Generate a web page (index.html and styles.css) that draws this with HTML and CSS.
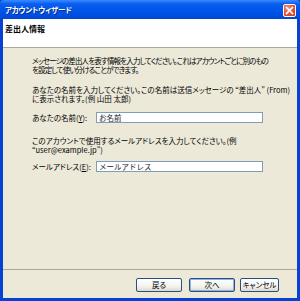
FILE: index.html
```html
<!DOCTYPE html>
<html lang="ja">
<head>
<meta charset="utf-8">
<link rel="stylesheet" href="styles.css">
</head>
<body>
<div class="window">
  <div class="titlebar">
    <span class="title">アカウントウィザード</span>
    <span class="close">
      <svg width="9" height="9" viewBox="0 0 9 9"><path d="M1.5 1.5 L7.5 7.5 M7.5 1.5 L1.5 7.5" stroke="#fff" stroke-width="1.6" stroke-linecap="square"/></svg>
    </span>
  </div>
  <div class="client">
    <div class="header">差出人情報</div>
    <div class="content">
      <p class="para p1">メッセージの差出人を表す情報を入力してください。これはアカウントごとに別のもの<br>を設定して使い分けることができます。</p>
      <p class="para p2">あなたの名前を入力してください。この名前は送信メッセージの “差出人” (From)<br>に表示されます。(例 山田 太郎)</p>
      <div class="row r1">
        <span class="label">あなたの名前(<u>Y</u>):</span>
        <span class="input">お名前</span>
      </div>
      <p class="para p3">このアカウントで使用するメールアドレスを入力してください。(例<br>“user@example.jp”)</p>
      <div class="row r2">
        <span class="label">メールアドレス(<u>E</u>):</span>
        <span class="input">メールアドレス</span>
      </div>
    </div>
    <div class="footer">
      <span class="btn back">戻る</span>
      <span class="btn next">次へ</span>
      <span class="btn cancel">キャンセル</span>
    </div>
  </div>
</div>
</body>
</html>
```

FILE: styles.css
```css
html, body {
  margin: 0;
  padding: 0;
  background: #ffffff;
}
.window {
  width: 300px;
  height: 301px;
  box-sizing: border-box;
  display: flex;
  flex-direction: column;
  background: #0842d4;
  padding: 0 3px 3px 3px;
  font-family: "Noto Sans CJK JP", sans-serif;
  font-feature-settings: "palt";
  color: #000;
}
.titlebar {
  height: 19px;
  margin: 0 -3px;
  padding: 0 4px 0 5px;
  display: flex;
  align-items: center;
  justify-content: space-between;
  background: linear-gradient(to bottom, #3a8cff 0%, #0a5ef0 20%, #0055e8 55%, #004ee0 80%, #0046d2 100%);
  border-radius: 4px 4px 0 0;
}
.title {
  color: #fff;
  font-size: 7.5px;
  font-weight: bold;
  letter-spacing: -0.2px;
  text-shadow: 1px 1px 0 #0a2a8a;
}
.close {
  width: 11px;
  height: 11px;
  margin-top: 1px;
  border: 1px solid #fff;
  border-radius: 2px;
  background: radial-gradient(circle at 35% 30%, #f29a80 0%, #e4583a 45%, #c8381c 100%);
  display: flex;
  align-items: center;
  justify-content: center;
}
.client {
  flex: 1;
  display: flex;
  flex-direction: column;
  background: #ece9d8;
}
.header {
  height: 29px;
  box-sizing: border-box;
  background: #ffffff;
  border-bottom: 1px solid #aca899;
  padding: 5px 0 0 2px;
  font-size: 8px;
  font-weight: bold;
  line-height: 10px;
}
.content {
  flex: 1;
  padding: 8px 0 0 29px;
  font-size: 7.5px;
  line-height: 9px;
}
.para {
  margin: 0;
  white-space: nowrap;
}
.p1 { letter-spacing: -0.85px; }
.p2 { margin-top: 11px; }
.p3 { margin-top: 13px; }
.row {
  display: flex;
  align-items: center;
}
.r1 { margin-top: 9px; }
.r2 { margin-top: 7px; }
.label {
  width: 64px;
  white-space: nowrap;
}
.label u { text-decoration: underline; }
.input {
  width: 167px;
  height: 11px;
  box-sizing: border-box;
  border: 1px solid #7f9db9;
  background: #fff;
  padding-left: 2px;
  font-size: 7.5px;
  font-feature-settings: normal;
  line-height: 9px;
  color: #222;
}
.footer {
  height: 29px;
  box-sizing: border-box;
  border-top: 1px solid #aca899;
  padding: 8px 18px 0 0;
  display: flex;
  justify-content: flex-end;
  align-items: flex-start;
}
.btn {
  height: 14px;
  box-sizing: border-box;
  border: 1px solid #2b4f7a;
  border-radius: 2px;
  background: linear-gradient(to bottom, #ffffff 0%, #f4f3ee 60%, #dcd9cc 100%);
  font-size: 7.5px;
  line-height: 12px;
  text-align: center;
}
.back { width: 46px; margin-right: 7px; }
.next { width: 46px; margin-right: 5px; box-shadow: inset 0 0 0 1px #8fb0e8; }
.cancel { width: 39px; }
```
